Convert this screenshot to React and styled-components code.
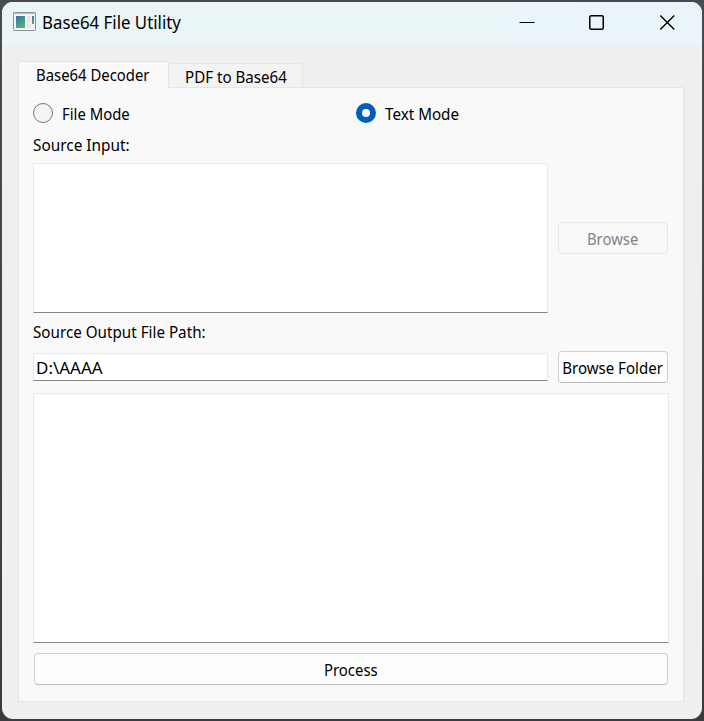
import React from "react";
import styled, { createGlobalStyle } from "styled-components";

const GlobalStyle = createGlobalStyle`
  * { box-sizing: border-box; }
  html, body { margin: 0; padding: 0; }
  body { font-family: "Noto Sans", "Open Sans", sans-serif; font-size: 16px; color: #000; }
`;

const Desktop = styled.div`
  width: 704px;
  height: 721px;
  padding: 2px;
  background: linear-gradient(#484c4e, #363d41);
`;

const Window = styled.div`
  width: 700px;
  height: 717px;
  border-radius: 11px;
  overflow: hidden;
  background: #efefef;
`;

const TitleBar = styled.header`
  display: flex;
  align-items: center;
  height: 43px;
  padding: 0 0 3px 11px;
  background: linear-gradient(100deg, #eaf5f8, #eaf6f7 60%, #e9f5fa);
`;

const Title = styled.div`
  flex: 1;
  padding-left: 6px;
  font-size: 18px;
`;

const Label = styled.span`
  display: inline-block;
  white-space: nowrap;
  line-height: 22px;
  transform: translateY(${(p) => p.$dy || 0}px) scaleX(${(p) => p.$scale || 0.93});
  transform-origin: ${(p) => (p.$center ? "center" : "left")} center;
`;

const WindowButton = styled.button`
  width: 70px;
  height: 40px;
  padding: 1px 0 0;
  border: 0;
  background: transparent;
  svg { display: block; margin: 0 auto; }
`;

const Body = styled.main`
  padding: 16px 18px 17px 16px;
`;

const TabBar = styled.div`
  display: flex;
  align-items: flex-end;
  height: 27px;
`;

const Tab = styled.button`
  width: ${(p) => p.$width}px;
  height: ${(p) => (p.$active ? 27 : 25)}px;
  padding: 0 0 0 ${(p) => (p.$active ? 17 : 16)}px;
  border: 1px solid #e5e5e5;
  border-left-width: ${(p) => (p.$active ? 1 : 0)}px;
  border-bottom: ${(p) => (p.$active ? "0" : "1px solid #e5e5e5")};
  background: ${(p) => (p.$active ? "#f9f9f9" : "#f3f3f3")};
  font: inherit;
  color: inherit;
  text-align: left;
  z-index: 1;
`;

const Panel = styled.section`
  height: 615px;
  margin-top: -1px;
  padding: 15px 14px 0;
  border: 1px solid #e5e5e5;
  background: #f9f9f9;
`;

const Radios = styled.div`
  display: grid;
  grid-template-columns: 323px 1fr;
  height: 22px;
`;

const RadioOption = styled.label`
  display: flex;
  align-items: center;
  gap: 9px;
  height: 20px;
`;

const RadioMark = styled.span`
  width: 20px;
  height: 20px;
  border: ${(p) => (p.$checked ? "6px solid #005fb8" : "1px solid #767676")};
  border-radius: 50%;
  background: ${(p) => (p.$checked ? "#fff" : "#f4f4f4")};
`;

const FieldLabel = styled.div`
  height: ${(p) => p.$height}px;
  padding-top: ${(p) => p.$top}px;
`;

const FieldRow = styled.div`
  display: grid;
  grid-template-columns: 515px 110px;
  column-gap: 10px;
  align-items: center;
  height: ${(p) => p.$height}px;
`;

const Field = styled.div`
  width: ${(p) => p.$width}px;
  height: ${(p) => p.$height}px;
  padding-left: 1.5px;
  border: 1px solid #e9e9e9;
  border-bottom-color: #868686;
  background: #fff;
`;

const Button = styled.button`
  display: flex;
  justify-content: center;
  align-items: center;
  width: ${(p) => p.$width}px;
  height: 32px;
  padding: 0;
  border: 1px solid #d0d0d0;
  border-bottom-color: #bababa;
  border-radius: 4px;
  background: #fdfdfd;
  font: inherit;
  color: #000;
  &:disabled { border-color: #e6e6e6; background: #f9f9f9; color: #838383; }
`;

const Output = styled.div`
  padding: 10px 0;
`;

const ProcessRow = styled.div`
  padding-left: 1px;
`;

const AppIconSvg = styled.svg`
  margin-bottom: 2px;
`;

function AppIcon() {
  return (
    <AppIconSvg width="23" height="19" viewBox="0 0 23 19">
      <defs>
        <linearGradient id="pane" x1="0" y1="0" x2="0.5" y2="1">
          <stop offset="0" stopColor="#3673a8" />
          <stop offset="1" stopColor="#53ad78" />
        </linearGradient>
      </defs>
      <rect x="0.5" y="0.5" width="22" height="18" rx="0.8" fill="#f2f3f4" stroke="#8b9099" />
      <path d="M1 1.5h21" stroke="#b6bcc8" />
      <rect x="3" y="4" width="9" height="12" fill="url(#pane)" />
      <path d="M14 4h4v7h-4z M14 12h4v4h-4z" fill="#e5e6e8" />
      <rect x="19" y="4" width="2" height="8" fill="url(#pane)" />
    </AppIconSvg>
  );
}

export default function App() {
  return (
    <>
      <GlobalStyle />
      <Desktop>
        <Window>
          <TitleBar>
            <AppIcon />
            <Title><Label $scale={0.935}>Base64 File Utility</Label></Title>
            <WindowButton aria-label="Minimize">
              <svg width="16" height="16"><path d="M0.5 7.5h15" stroke="#000" /></svg>
            </WindowButton>
            <WindowButton aria-label="Maximize">
              <svg width="16" height="16"><rect x="0.75" y="0.75" width="13.5" height="13.5" rx="1.5" fill="none" stroke="#000" strokeWidth="1.5" /></svg>
            </WindowButton>
            <WindowButton aria-label="Close">
              <svg width="16" height="16"><path d="M1.3 0.5l14 14M15.3 0.5L1.3 14.5" stroke="#000" strokeWidth="1.4" /></svg>
            </WindowButton>
          </TitleBar>
          <Body>
            <TabBar>
              <Tab $active $width={151}><Label>Base64 Decoder</Label></Tab>
              <Tab $width={134}><Label $dy={1} $scale={0.945}>PDF to Base64</Label></Tab>
            </TabBar>
            <Panel>
              <Radios>
                <RadioOption><RadioMark /><Label $dy={1}>File Mode</Label></RadioOption>
                <RadioOption><RadioMark $checked /><Label $dy={1} $scale={0.95}>Text Mode</Label></RadioOption>
              </Radios>
              <FieldLabel $height={38} $top={9}><Label $scale={0.96}>Source Input:</Label></FieldLabel>
              <FieldRow $height={150}>
                <Field $width={515} $height={150} />
                <Button $width={110} disabled><Label $center $dy={1}>Browse</Label></Button>
              </FieldRow>
              <FieldLabel $height={38} $top={8}><Label $scale={0.95}>Source Output File Path:</Label></FieldLabel>
              <FieldRow $height={32}>
                <Field $width={515} $height={28}><Label $dy={3} $scale={1.06}>D:\AAAA</Label></Field>
                <Button $width={110}><Label $center $dy={1} $scale={0.94}>Browse Folder</Label></Button>
              </FieldRow>
              <Output><Field $width={636} $height={250} /></Output>
              <ProcessRow><Button $width={634}><Label $center $dy={1}>Process</Label></Button></ProcessRow>
            </Panel>
          </Body>
        </Window>
      </Desktop>
    </>
  );
}
